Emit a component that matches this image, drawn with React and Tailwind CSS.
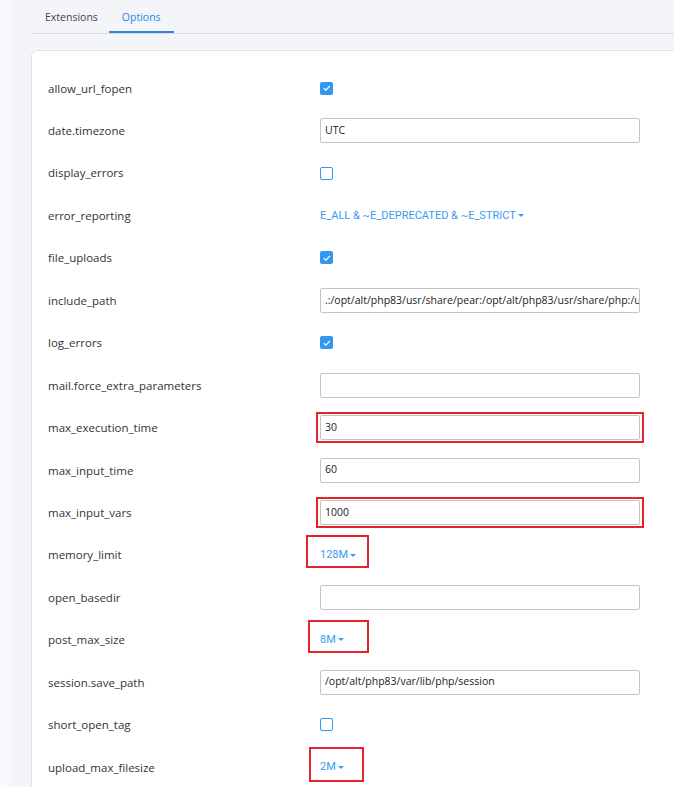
import React from 'react';

const rows = [
  { name: 'allow_url_fopen', type: 'check', checked: true },
  { name: 'date.timezone', type: 'text', value: 'UTC' },
  { name: 'display_errors', type: 'check', checked: false },
  { name: 'error_reporting', type: 'select', value: 'E_ALL & ~E_DEPRECATED & ~E_STRICT' },
  { name: 'file_uploads', type: 'check', checked: true },
  { name: 'include_path', type: 'text', value: '.:/opt/alt/php83/usr/share/pear:/opt/alt/php83/usr/share/php:/usr/share/pear:/usr/share/php' },
  { name: 'log_errors', type: 'check', checked: true },
  { name: 'mail.force_extra_parameters', type: 'text', value: '' },
  { name: 'max_execution_time', type: 'text', value: '30', mark: true },
  { name: 'max_input_time', type: 'text', value: '60' },
  { name: 'max_input_vars', type: 'text', value: '1000', mark: true },
  { name: 'memory_limit', type: 'select', value: '128M', mark: 'left-[-14px] top-[-12px] h-[33px] w-[63px]' },
  { name: 'open_basedir', type: 'text', value: '' },
  { name: 'post_max_size', type: 'select', value: '8M', mark: 'left-[-12px] top-[-12px] h-[33px] w-[61px]' },
  { name: 'session.save_path', type: 'text', value: '/opt/alt/php83/var/lib/php/session' },
  { name: 'short_open_tag', type: 'check', checked: false },
  { name: 'upload_max_filesize', type: 'select', value: '2M', mark: 'left-[-11px] top-[-12px] h-[35px] w-[55px]' },
];

function Check({ checked }) {
  if (checked) {
    return (
      <span className="flex h-[13px] w-[13px] items-center justify-center rounded-[2px] bg-[#3297ee]">
        <svg viewBox="0 0 12 12" className="h-[10px] w-[10px]" fill="none" stroke="white" strokeWidth="1.5">
          <path d="M2.2 6.3l2.4 2.3 5-5.2" />
        </svg>
      </span>
    );
  }
  return <span className="block h-[13px] w-[13px] rounded-[2px] border border-[#3297ee] bg-white" />;
}

function Control({ row }) {
  if (row.type === 'check') return <Check checked={row.checked} />;
  if (row.type === 'text') {
    return (
      <div className="relative">
        <div className="flex h-[25px] w-[320px] items-center overflow-hidden whitespace-nowrap rounded-[2px] border border-[#c4c4c4] bg-white px-[4px] text-[10.5px] text-[#222]">
          {row.value}
        </div>
        {row.mark && (
          <div className="pointer-events-none absolute left-[-4px] top-[-3px] h-[31px] w-[328px] border-2 border-[#e8222a]" />
        )}
      </div>
    );
  }
  return (
    <div className="relative">
      <span className="flex items-center font-['Roboto',sans-serif] text-[11px] leading-[16px] text-[#3a9bf0]">
        {row.value}
        <svg viewBox="0 0 8 4" className="ml-[2px] h-[3px] w-[6px]" fill="#3a9bf0">
          <path d="M0 0h8L4 4z" />
        </svg>
      </span>
      {row.mark && (
        <div className={`pointer-events-none absolute border-2 border-[#e8222a] ${row.mark}`} />
      )}
    </div>
  );
}

export default function App() {
  return (
    <div className="flex min-h-[787px] bg-[#f4f5f9] font-['Open_Sans',sans-serif] text-[#333]">
      <div className="w-[12px] shrink-0 bg-[#f9f9fb]" />
      <div className="flex-1 overflow-hidden pl-[19px]">
        <div className="flex h-[34px] items-stretch border-b border-[#dcdee3] text-[10.5px]">
          <div className="flex items-center pl-[14px] pr-[12px] pt-[2px] text-[#444]">Extensions</div>
          <div className="ml-[-1px] flex items-center border-b-2 border-[#2f86e0] px-[13px] pt-[4px] text-[#2f86e0]">Options</div>
        </div>
        <div className="mt-[16px] rounded-tl-[6px] border-l border-t border-[#e1e3e8] bg-white pt-[16px]">
          {rows.map((row) => (
            <div key={row.name} className="flex h-[42.45px] items-center">
              <div className="w-[288px] shrink-0 pl-[16px] text-[11.5px] text-[#333]">{row.name}</div>
              <Control row={row} />
            </div>
          ))}
        </div>
      </div>
    </div>
  );
}
